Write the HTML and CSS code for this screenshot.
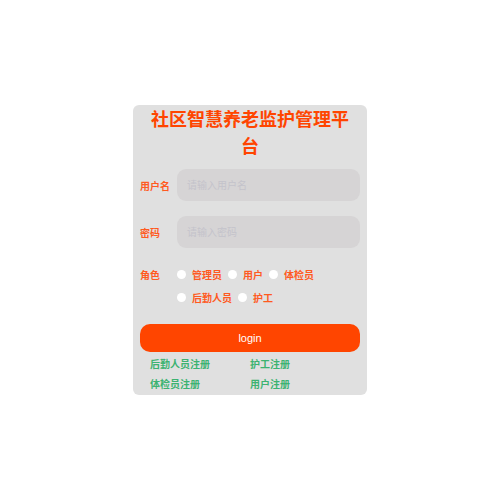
FILE: index.html
```html
<!DOCTYPE html>
<html>
<head>
<meta charset="utf-8">
<link rel="stylesheet" href="styles.css">
</head>
<body>
<div class="page">
  <div class="card">
    <h1 class="title">社区智慧养老监护管理平台</h1>
    <div class="row">
      <span class="label">用户名</span>
      <div class="input">请输入用户名</div>
    </div>
    <div class="row">
      <span class="label">密码</span>
      <div class="input">请输入密码</div>
    </div>
    <div class="roles">
      <span class="label">角色</span>
      <div class="options">
        <span class="opt"><i class="dot"></i>管理员</span>
        <span class="opt"><i class="dot"></i>用户</span>
        <span class="opt"><i class="dot"></i>体检员</span>
        <span class="opt"><i class="dot"></i>后勤人员</span>
        <span class="opt"><i class="dot"></i>护工</span>
      </div>
    </div>
    <div class="btn">login</div>
    <div class="links">
      <span>后勤人员注册</span>
      <span>护工注册</span>
      <span>体检员注册</span>
      <span>用户注册</span>
    </div>
  </div>
</div>
</body>
</html>
```
FILE: styles.css
```css
html, body {
  margin: 0;
  padding: 0;
}
body {
  font-family: "Noto Sans CJK SC", "Liberation Sans", sans-serif;
  background: #fff;
}
.page {
  width: 500px;
  height: 500px;
  display: flex;
  align-items: center;
  justify-content: center;
}
.card {
  width: 234px;
  box-sizing: border-box;
  background: #e0e0e0;
  border-radius: 6px;
  padding: 0 7px 1px;
  display: flex;
  flex-direction: column;
}
.title {
  margin: 0;
  font-size: 18px;
  line-height: 27px;
  font-weight: 700;
  color: #ff4500;
  text-align: center;
  padding: 0 8px;
}
.row {
  display: flex;
  align-items: center;
  margin-top: 10px;
  height: 32px;
}
.row + .row {
  margin-top: 15px;
}
.label {
  width: 37px;
  flex: none;
  font-size: 10px;
  font-weight: 700;
  color: #ff5a1f;
}
.input {
  flex: 1;
  height: 32px;
  border-radius: 9px;
  background: #d6d4d5;
  color: #c4c3cb;
  font-size: 10px;
  line-height: 32px;
  padding-left: 10px;
}
.roles {
  display: flex;
  align-items: flex-start;
  margin-top: 15px;
}
.roles .label {
  line-height: 23px;
}
.options {
  display: flex;
  flex-wrap: wrap;
  width: 150px;
}
.opt {
  display: flex;
  align-items: center;
  height: 23px;
  font-size: 10px;
  font-weight: 700;
  color: #ff5a1f;
  margin-right: 6px;
}
.dot {
  width: 9px;
  height: 9px;
  border-radius: 50%;
  background: #fff;
  margin-right: 6px;
}
.btn {
  margin-top: 15px;
  height: 28px;
  border-radius: 10px;
  background: #ff4500;
  color: #fff;
  font-family: "Liberation Sans", sans-serif;
  font-size: 11px;
  line-height: 28px;
  text-align: center;
}
.links {
  display: grid;
  grid-template-columns: 100px 100px;
  padding-left: 10px;
  margin-top: 2px;
}
.links span {
  font-size: 10px;
  font-weight: 700;
  color: #3cb371;
  line-height: 20px;
}
```
